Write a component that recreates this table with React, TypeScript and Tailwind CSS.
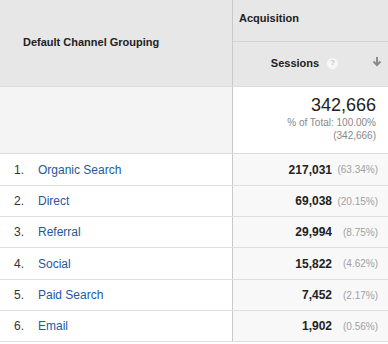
import React from "react";

const rows = [
  { n: 1, name: "Organic Search", value: "217,031", pct: "(63.34%)", h: "h-[32px]" },
  { n: 2, name: "Direct", value: "69,038", pct: "(20.15%)", h: "h-[31px]" },
  { n: 3, name: "Referral", value: "29,994", pct: "(8.75%)", h: "h-[31px]" },
  { n: 4, name: "Social", value: "15,822", pct: "(4.62%)", h: "h-[32px]" },
  { n: 5, name: "Paid Search", value: "7,452", pct: "(2.17%)", h: "h-[31px]" },
  { n: 6, name: "Email", value: "1,902", pct: "(0.56%)", h: "h-[31px]" },
];

export default function App() {
  return (
    <div className="w-[388px] h-[344px] overflow-hidden bg-white font-['Liberation_Sans',Arial,sans-serif] text-[#222]">
      {/* header */}
      <div className="grid grid-cols-[233px_1fr] h-[87px] bg-[#e7e7e7] border-b border-[#dcdcdc]">
        <div className="flex items-center pl-[23px] pb-[2px] text-[11px] font-bold border-r border-[#c9c9c9]">
          Default Channel Grouping
        </div>
        <div className="flex flex-col">
          <div className="h-[42px] flex items-center pl-[6px] pb-[4px] text-[11px] font-bold border-b border-[#d2d2d2]">
            Acquisition
          </div>
          <div className="flex-1 flex items-center pb-[2px]">
            <div className="flex-1 flex items-center justify-center pl-[4px] gap-[8px]">
              <span className="text-[11px] font-bold">Sessions</span>
              <span className="w-[11px] h-[11px] rounded-full bg-[#f7f7f7] text-[#c8c8c8] text-[8px] font-bold flex items-center justify-center leading-none">
                ?
              </span>
            </div>
            <svg width="10" height="11" viewBox="0 0 10 11" className="mr-[6px] mb-[4px]">
              <path d="M5 1v8M1.5 5.5L5 9l3.5-3.5" fill="none" stroke="#8a8a8a" strokeWidth="2" />
            </svg>
          </div>
        </div>
      </div>

      {/* totals */}
      <div className="grid grid-cols-[233px_1fr] h-[67px] border-b border-[#dcdcdc]">
        <div className="bg-[#f4f4f4] border-r border-[#c9c9c9]" />
        <div className="flex flex-col items-end pr-[12px] pt-[8px]">
          <span className="text-[18px] leading-[20px] text-[#222]">342,666</span>
          <span className="text-[10px] leading-[13px] text-[#888] mt-[1px]">% of Total: 100.00%</span>
          <span className="text-[10px] leading-[13px] text-[#888]">(342,666)</span>
        </div>
      </div>

      {/* rows */}
      {rows.map((r) => (
        <div key={r.n} className={`grid grid-cols-[233px_1fr] border-b border-[#dedede] ${r.h}`}>
          <div className="flex items-center border-r border-[#c9c9c9] text-[12px]">
            <span className="w-[38px] pl-[14px] text-[#333]">{r.n}.</span>
            <span className="text-[#2458a0]">{r.name}</span>
          </div>
          <div className="flex items-center justify-end bg-[#f8f8f8] pr-[10px]">
            <span className="text-[12px] font-bold text-[#222]">{r.value}</span>
            <span className="w-[46px] text-right text-[10px] text-[#a0a0a0]">{r.pct}</span>
          </div>
        </div>
      ))}
    </div>
  );
}
